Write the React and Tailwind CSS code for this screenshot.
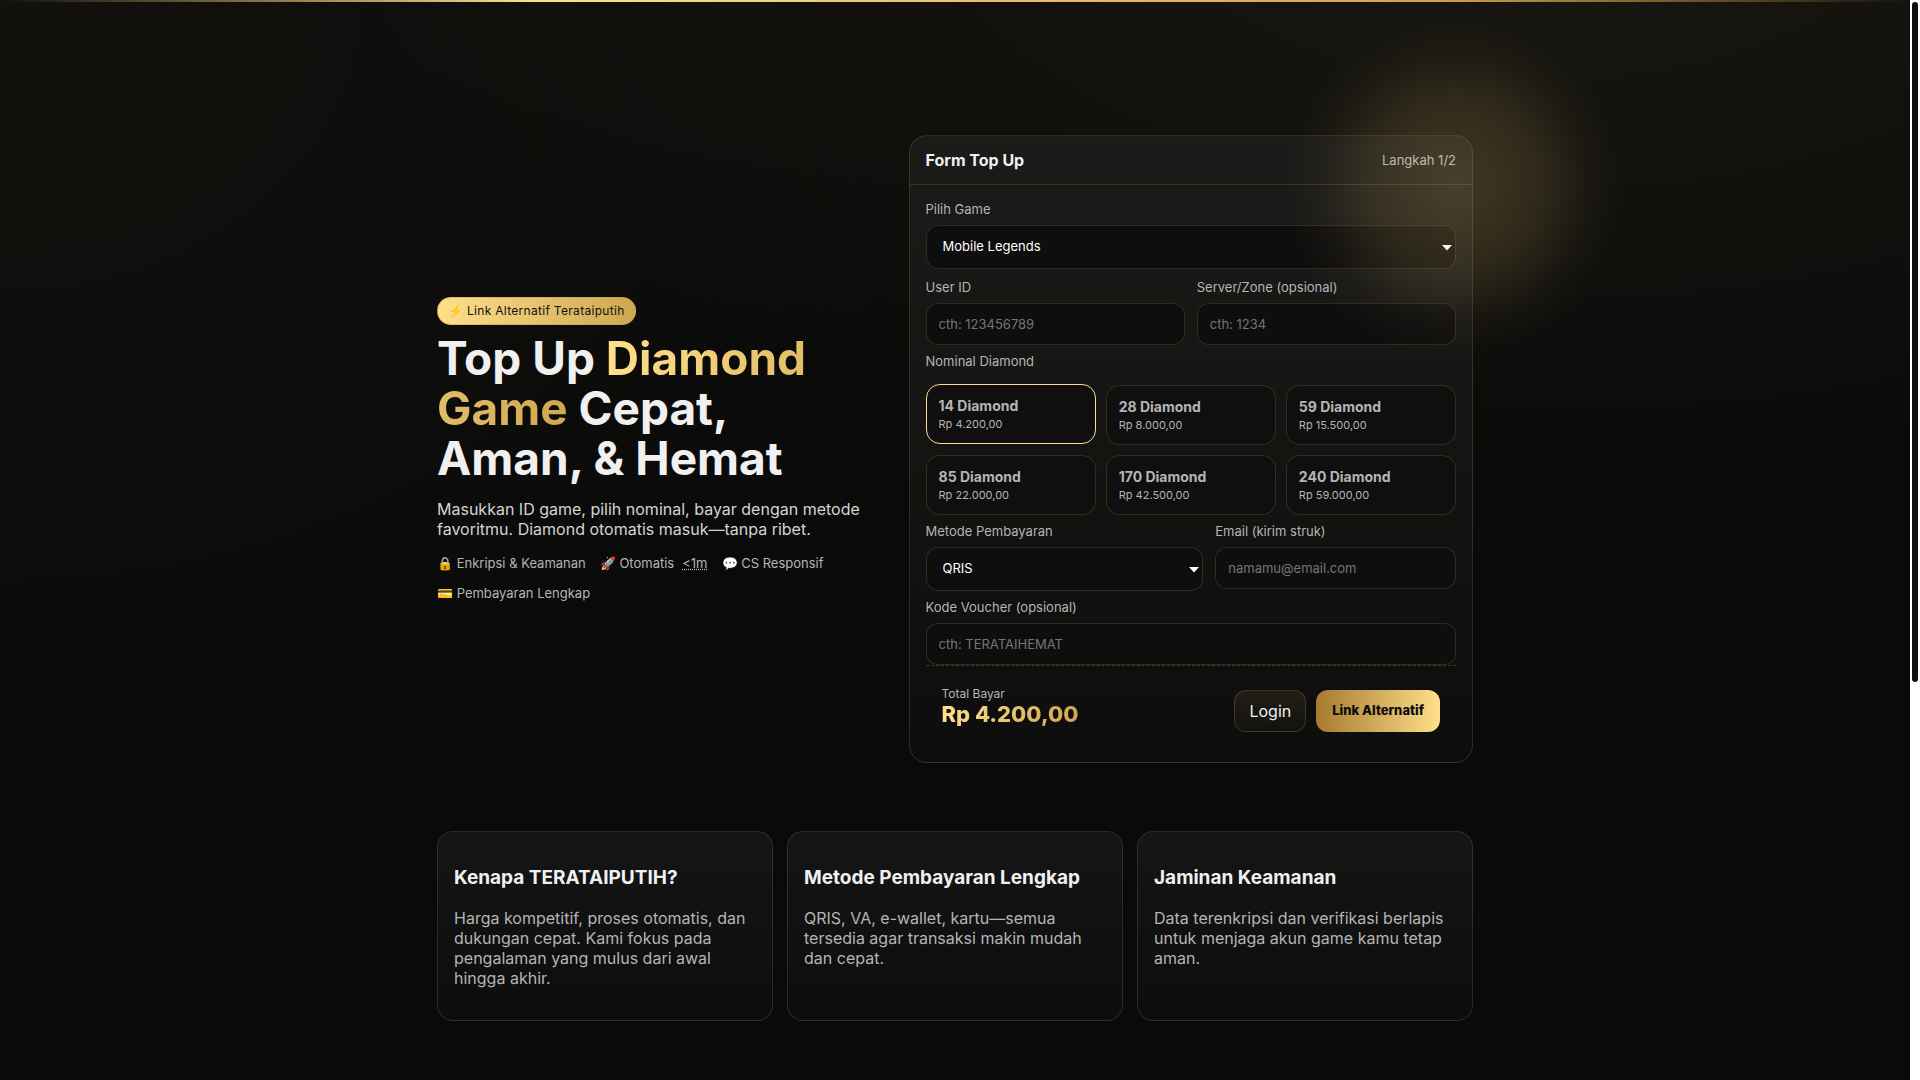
const options = [
  ["14 Diamond", "Rp 4.200,00"],
  ["28 Diamond", "Rp 8.000,00"],
  ["59 Diamond", "Rp 15.500,00"],
  ["85 Diamond", "Rp 22.000,00"],
  ["170 Diamond", "Rp 42.500,00"],
  ["240 Diamond", "Rp 59.000,00"],
];

const features = [
  ["Kenapa TERATAIPUTIH?", "Harga kompetitif, proses otomatis, dan dukungan cepat. Kami fokus pada pengalaman yang mulus dari awal hingga akhir."],
  ["Metode Pembayaran Lengkap", "QRIS, VA, e-wallet, kartu—semua tersedia agar transaksi makin mudah dan cepat."],
  ["Jaminan Keamanan", "Data terenkripsi dan verifikasi berlapis untuk menjaga akun game kamu tetap aman."],
];

const field =
  "block w-full rounded-xl border border-[#c89b3c]/20 bg-[#0e0e0e] text-[13px] text-white outline-none placeholder:text-[#757575]";

function Label({ htmlFor, children }) {
  return (
    <label htmlFor={htmlFor} className="mb-2 block text-[13px] leading-4 text-[#b5b5b5]">
      {children}
    </label>
  );
}

function TextField({ id, label, placeholder, type = "text" }) {
  return (
    <div>
      <Label htmlFor={id}>{label}</Label>
      <input id={id} type={type} placeholder={placeholder} className={`${field} h-[42px] px-3`} />
    </div>
  );
}

function SelectField({ id, label, items }) {
  return (
    <div>
      <Label htmlFor={id}>{label}</Label>
      <div className="relative">
        <select id={id} className={`${field} h-11 appearance-none px-4`}>
          {items.map((item) => (
            <option key={item}>{item}</option>
          ))}
        </select>
        <svg className="pointer-events-none absolute top-5 right-1 h-[6px] w-[10px]" viewBox="0 0 10 6" fill="#fff" aria-hidden="true">
          <path d="M0 0h10L5 5.5z" />
        </svg>
      </div>
    </div>
  );
}

function TopUpForm() {
  return (
    <form className="rounded-[18px] border border-[#c89b3c]/20 bg-linear-to-b from-[#1b1b19] to-[#0d0d0d]">
      <div className="flex items-center justify-between border-b border-[#c89b3c]/20 px-4 py-[14px]">
        <h2 className="text-base leading-5 font-bold">Form Top Up</h2>
        <span className="text-[13px] leading-5 text-[#b5b5b5]">Langkah 1/2</span>
      </div>
      <div className="px-4 pt-4 pb-3">
        <div className="flex flex-col gap-[10px]">
          <SelectField id="game" label="Pilih Game" items={["Mobile Legends", "Free Fire", "PUBG Mobile"]} />
          <div className="grid grid-cols-2 gap-3">
            <TextField id="user" label="User ID" placeholder="cth: 123456789" />
            <TextField id="zone" label="Server/Zone (opsional)" placeholder="cth: 1234" />
          </div>
        </div>
        <fieldset className="mt-2">
          <legend className="mb-4 text-[13px] leading-4 text-[#b5b5b5]">Nominal Diamond</legend>
          <div className="grid grid-cols-3 gap-[10px]">
            {options.map(([name, price], i) => (
              <label
                key={name}
                className={`block h-[60px] cursor-pointer rounded-[14px] border bg-[#0f0f0f] px-3 py-3 text-[#b5b5b5] ${
                  i === 0 ? "-translate-y-px border-[#ffe08a]" : "border-[#c89b3c]/20"
                }`}
              >
                <input type="radio" name="nominal" defaultChecked={i === 0} className="sr-only" />
                <span className="block text-sm leading-[18px] font-bold">{name}</span>
                <span className="block text-[11px] leading-[18px]">{price}</span>
              </label>
            ))}
          </div>
        </fieldset>
        <div className="mt-2 flex flex-col gap-2">
          <div className="grid grid-cols-[15fr_13fr] gap-3">
            <SelectField id="method" label="Metode Pembayaran" items={["QRIS", "Virtual Account", "E-Wallet"]} />
            <TextField id="email" type="email" label="Email (kirim struk)" placeholder="namamu@email.com" />
          </div>
          <TextField id="voucher" label="Kode Voucher (opsional)" placeholder="cth: TERATAIHEMAT" />
        </div>
        <div className="flex items-start justify-between border-t border-dashed border-[#c89b3c]/30 px-4 pt-5 pb-[18px]">
          <div>
            <div className="text-xs leading-4 text-[#b5b5b5]">Total Bayar</div>
            <div className="bg-linear-to-r from-[#ffe08a] to-[#cfa750] bg-clip-text text-[22px] leading-6 font-extrabold text-transparent">
              Rp 4.200,00
            </div>
          </div>
          <div className="flex gap-[10px] pt-1">
            <button type="button" className="h-[42px] rounded-xl border border-[#c89b3c]/25 bg-linear-to-b from-[#221d16] to-[#12120f] px-[14px] text-base">
              Login
            </button>
            <a href="#alternatif" className="flex h-[42px] items-center rounded-xl bg-linear-to-r from-[#a67c2d] to-[#ffe08a] px-4 text-[13px] font-extrabold text-[#0b0b0b]">
              Link Alternatif
            </a>
          </div>
        </div>
      </div>
    </form>
  );
}

export default function App() {
  return (
    <div className="flex min-h-screen bg-[#0a0a0a] font-[Inter,sans-serif] text-[#f0f0f0]">
      <div className="relative min-w-0 flex-1 overflow-hidden bg-[radial-gradient(1200px_600px_at_80%_-10%,rgba(212,185,95,0.08),transparent),radial-gradient(1000px_800px_at_0%_0%,rgba(212,185,95,0.04),transparent)]">
        <div className="absolute inset-x-0 top-0 h-[2px] bg-[linear-gradient(90deg,transparent,#ffe08a_28%,#d0a44c_75%,transparent)]" />
        <main className="mx-auto max-w-[1100px] px-8 pt-[135px] pb-[59px]">
          <section className="grid grid-cols-[11fr_14fr] items-center gap-7">
            <div>
              <span className="inline-flex h-7 items-center rounded-full border border-[#c89b3c]/50 bg-linear-to-r from-[#ffe08a] to-[#cfa750] px-[10px] text-xs tracking-[0.3px] text-[#111]">
                ⚡ Link Alternatif Terataiputih
              </span>
              <h1 className="mt-2 text-[46px] leading-[50px] font-bold">
                Top Up{" "}
                <span className="bg-linear-to-r from-[#ffe08a] to-[#cfa750] bg-clip-text text-transparent">Diamond Game</span> Cepat,
                Aman, &amp; Hemat
              </h1>
              <p className="mt-4 text-base leading-5 text-[#d4d4d4]">
                Masukkan ID game, pilih nominal, bayar dengan metode favoritmu. Diamond otomatis masuk—tanpa ribet.
              </p>
              <ul className="mt-4 flex flex-wrap gap-x-[14px] gap-y-[14px] text-[13px] leading-4 text-[#b5b5b5]">
                <li>🔒 Enkripsi &amp; Keamanan</li>
                <li className="flex gap-2">
                  🚀 Otomatis <abbr title="kurang dari 1 menit">&lt;1m</abbr>
                </li>
                <li>💬 CS Responsif</li>
                <li>💳 Pembayaran Lengkap</li>
              </ul>
            </div>
            <TopUpForm />
          </section>
          <section className="mt-[68px] grid grid-cols-3 gap-[14px]">
            {features.map(([title, text]) => (
              <article key={title} className="rounded-2xl border border-[#c89b3c]/20 bg-linear-to-b from-[#151515] to-[#0d0d0d] px-4 py-8">
                <h3 className="text-[19px] leading-7 font-bold">{title}</h3>
                <p className="mt-4 text-base leading-5 text-[#b5b5b5]">{text}</p>
              </article>
            ))}
          </section>
        </main>
        <div className="pointer-events-none absolute top-[17px] left-[calc(50%+330px)] size-[340px] rounded-full bg-[radial-gradient(closest-side,rgba(255,215,120,0.2),rgba(255,215,120,0.12)_50%,rgba(255,215,120,0.03)_80%,transparent)]" />
      </div>
      <div className="w-[10px] bg-white p-[2px]" aria-hidden="true">
        <div className="h-[680px] rounded-full bg-[#111]" />
      </div>
    </div>
  );
}
